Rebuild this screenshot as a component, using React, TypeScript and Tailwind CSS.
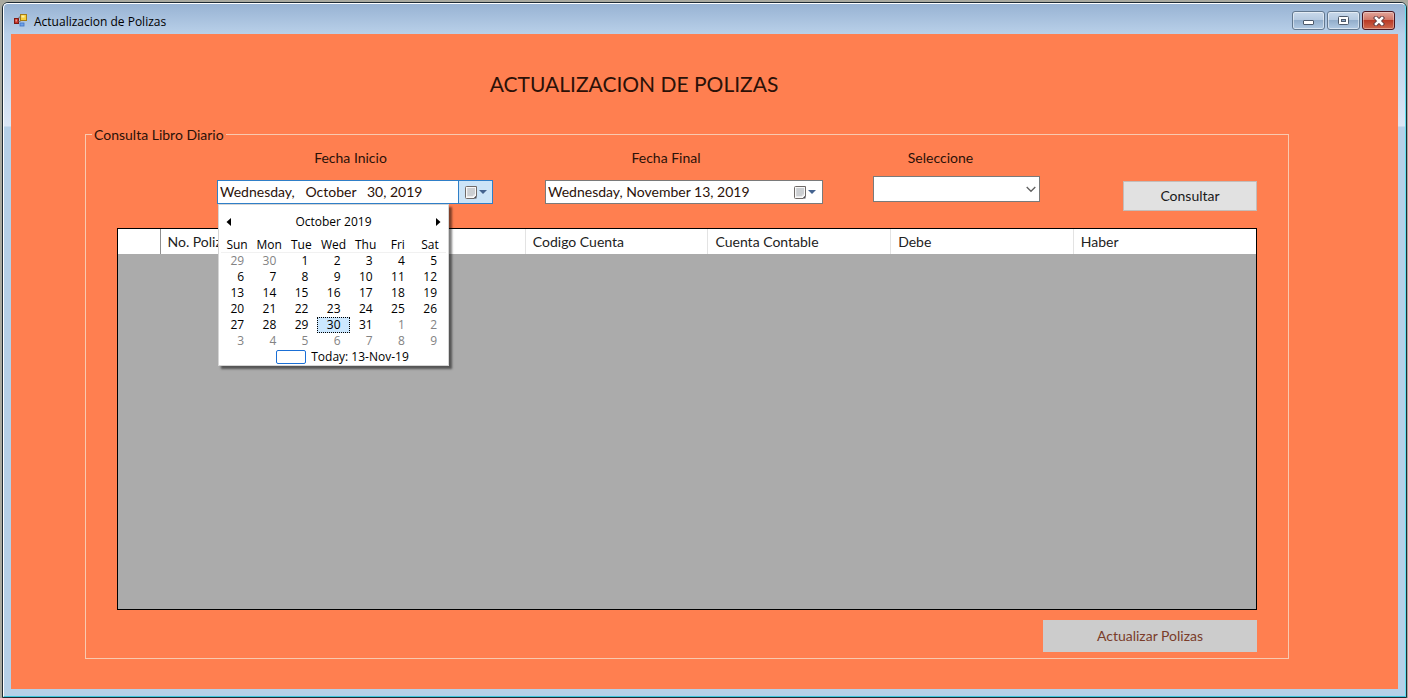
import { useState } from "react";

const WEEKDAYS = ["Sun", "Mon", "Tue", "Wed", "Thu", "Fri", "Sat"];

const WEEKS: number[][] = [
  [29, 30, 1, 2, 3, 4, 5],
  [6, 7, 8, 9, 10, 11, 12],
  [13, 14, 15, 16, 17, 18, 19],
  [20, 21, 22, 23, 24, 25, 26],
  [27, 28, 29, 30, 31, 1, 2],
  [3, 4, 5, 6, 7, 8, 9],
];

const COLUMNS = ["No. Poliza", "", "Codigo Cuenta", "Cuenta Contable", "Debe", "Haber"];

function isOutsideMonth(week: number, day: number) {
  return (week === 0 && day > 7) || (week > 3 && day < 10);
}

function AppIcon() {
  return (
    <svg width="14" height="14" viewBox="0 0 14 14" aria-hidden="true">
      <rect x="0.5" y="4.5" width="4" height="5" fill="#c8362c" stroke="#7d1a14" />
      <rect x="1.5" y="5.5" width="1.5" height="2" fill="#f09a90" />
      <rect x="6.5" y="0.5" width="6" height="6" fill="#f7cf3a" stroke="#a67c12" />
      <rect x="7.5" y="1.5" width="3" height="2" fill="#fdf0a0" />
      <rect x="6" y="9" width="4" height="3" fill="#6ea2ea" stroke="#3f73c4" strokeWidth="0.8" />
      <path d="M4.5 7.5h2M5 4.5v-1.5h1.5" stroke="#777" fill="none" />
    </svg>
  );
}

function MinimizeIcon() {
  return (
    <svg width="12" height="10" viewBox="0 0 12 10" aria-hidden="true">
      <rect x="0.5" y="4.5" width="10" height="4" rx="0.5" fill="#fff" stroke="#4d5a6b" />
    </svg>
  );
}

function MaximizeIcon() {
  return (
    <svg width="12" height="10" viewBox="0 0 12 10" aria-hidden="true">
      <rect x="0.5" y="0.5" width="10" height="8" rx="1" fill="#fff" stroke="#4d5a6b" />
      <rect x="3.5" y="3.5" width="4" height="2" fill="#8fa9c6" stroke="#4d5a6b" />
    </svg>
  );
}

function CloseIcon() {
  return (
    <svg width="12" height="10" viewBox="0 0 12 10" aria-hidden="true">
      <path d="M3 2 9 8M9 2 3 8" stroke="#5d3a40" strokeWidth="4.4" strokeLinecap="square" />
      <path d="M3 2 9 8M9 2 3 8" stroke="#fff" strokeWidth="2.6" strokeLinecap="square" />
    </svg>
  );
}

function CalendarIcon() {
  return (
    <svg width="22" height="13" viewBox="0 0 22 13" aria-hidden="true">
      <path d="M1.5 0.5h10v9.500l-2.500 2.500h-7.500a1 1 0 0 1-1-1v-10a1 1 0 0 1 1-1z" fill="#f8f8f8" stroke="#6f6a68" />
      <path d="M2.500 3h7.500M2.500 5h7.500M2.500 7h7.500M2.500 9h6M3 2v8.500M5 2v8.500M7 2v8.500M9 2v7.500" stroke="#a3a8ae" strokeWidth="0.600" />
      <path d="M11.500 9.500v3h-3z" fill="#4b4b52" />
      <path d="M14 4h8l-4 4z" fill="#44638f" />
    </svg>
  );
}

function MonthCalendar() {
  return (
    <div className="absolute top-6 left-px z-10 w-[231px] border border-[#d5d5d5] bg-white px-[2px] font-['Open_Sans','Noto_Sans',sans-serif] text-xs text-black shadow-[3px_3px_2px_rgba(0,0,0,0.5)]">
      <div className="flex h-[33px] items-center justify-between px-[4px]">
        <button type="button" aria-label="Previous month" className="p-px">
          <svg width="5" height="8" viewBox="0 0 5 8" aria-hidden="true">
            <path d="M5 0v8L0.500 4z" />
          </svg>
        </button>
        <span>October 2019</span>
        <button type="button" aria-label="Next month" className="p-px">
          <svg width="5" height="8" viewBox="0 0 5 8" aria-hidden="true">
            <path d="M0 0v8L4.500 4z" />
          </svg>
        </button>
      </div>
      <table className="w-full table-fixed border-collapse">
        <thead>
          <tr className="border-b border-[#f1f1f1] leading-[14px]">
            {WEEKDAYS.map((d) => (
              <th key={d} scope="col" className="p-0 text-center font-normal">
                {d}
              </th>
            ))}
          </tr>
        </thead>
        <tbody>
          {WEEKS.map((week, w) => (
            <tr key={w}>
              {week.map((day) => {
                const outside = isOutsideMonth(w, day);
                const selected = day === 30 && !outside;
                return (
                  <td key={day} className="p-0">
                    <button
                      type="button"
                      aria-pressed={selected}
                      className={
                        selected
                          ? "block h-4 w-full border border-dotted border-black bg-[#cce8ff] pr-2 text-right leading-[14px]"
                          : outside
                            ? "block h-4 w-full pr-[9px] text-right leading-4 text-[#838383]"
                            : "block h-4 w-full pr-[9px] text-right leading-4"
                      }
                    >
                      {day}
                    </button>
                  </td>
                );
              })}
            </tr>
          ))}
        </tbody>
      </table>
      <button type="button" className="flex h-4 w-full items-center justify-center gap-[5px] pl-[18px]">
        <span className="h-[14px] w-[30px] rounded-[2px] border border-[#1a6fd6]" />
        <span className="leading-4">Today: 13-Nov-19</span>
      </button>
    </div>
  );
}

export default function App() {
  const [start, setStart] = useState("Wednesday,   October   30, 2019");
  const [end, setEnd] = useState("Wednesday, November 13, 2019");

  return (
    <div className="flex min-h-screen flex-col bg-[#a9a99f] pt-[2px] pr-px pl-[2px] font-[Lato,'Open_Sans',sans-serif] text-sm text-[#2b1108]">
      <div className="flex flex-1 flex-col rounded-t-md border border-[#1d2a33] bg-[#b9d1ea]">
        <div className="flex flex-1 flex-col rounded-t-[5px] border border-t-white border-r-[#5fe0ee] border-b-[#3fc4dc] border-l-white bg-[linear-gradient(180deg,#98b3d3_0px,#b9d0e9_30px,#dbe6f5_122px,#b5d0e8_123px)] px-[7px] pb-[7px]">
          <header className="flex h-[30px] items-center gap-[6px] pt-[3px] pr-[3px] pl-[3px] font-['Open_Sans','Noto_Sans',sans-serif] text-xs text-black">
            <AppIcon />
            <h1 className="flex-1 pt-[3px] text-xs">Actualizacion de Polizas</h1>
            <div className="flex gap-[2px]">
              <button
                type="button"
                aria-label="Minimize"
                className="flex h-[19px] w-[33px] items-center justify-center rounded-[3px] border border-[#62788f] bg-[linear-gradient(180deg,#c9d9ea_0%,#b4c9e0_48%,#93aecb_50%,#b1cae3_100%)] shadow-[inset_0_0_0_1px_rgba(255,255,255,0.5)]"
              >
                <MinimizeIcon />
              </button>
              <button
                type="button"
                aria-label="Maximize"
                className="flex h-[19px] w-[33px] items-center justify-center rounded-[3px] border border-[#62788f] bg-[linear-gradient(180deg,#c9d9ea_0%,#b4c9e0_48%,#93aecb_50%,#b1cae3_100%)] shadow-[inset_0_0_0_1px_rgba(255,255,255,0.5)]"
              >
                <MaximizeIcon />
              </button>
              <button
                type="button"
                aria-label="Close"
                className="flex h-[19px] w-[33px] items-center justify-center rounded-[3px] border border-[#4b1620] bg-[linear-gradient(180deg,#e2a59b_0%,#d17565_48%,#b93a26_50%,#d0694f_100%)] shadow-[inset_0_0_0_1px_rgba(255,255,255,0.35)]"
              >
                <CloseIcon />
              </button>
            </div>
          </header>

          <main className="flex flex-1 flex-col bg-[#ff7f50] pt-[34px] pr-[109px] pb-[30px] pl-[74px]">
            <h2 className="pr-[106px] text-center text-[21px] leading-8">ACTUALIZACION DE POLIZAS</h2>

            <section
              aria-labelledby="consulta-libro"
              className="mt-[34px] flex flex-1 flex-col border border-[#f8c9b0] px-[31px] pb-[6px]"
            >
              <h3 id="consulta-libro" className="-mt-[10px] -ml-[25px] self-start bg-[#ff7f50] px-[2px] leading-5">
                Consulta Libro Diario
              </h3>

              <div className="flex h-[83px] items-start pt-[3px] pl-[100px]">
                <div className="mr-[52px] w-[276px]">
                  <label htmlFor="fecha-inicio" className="block pr-[9px] text-center leading-5">
                    Fecha Inicio
                  </label>
                  <div className="relative mt-[12px]">
                    <div className="flex h-6 border border-[#2f7fc8] bg-white">
                      <input
                        id="fecha-inicio"
                        value={start}
                        onChange={(e) => setStart(e.target.value)}
                        className="min-w-0 flex-1 pb-px pl-[2px] outline-none"
                      />
                      <button
                        type="button"
                        aria-label="Abrir calendario de fecha inicio"
                        className="flex w-[34px] items-center justify-center border-l border-[#2f7fc8] bg-[#cce4f7]"
                      >
                        <CalendarIcon />
                      </button>
                    </div>
                    <MonthCalendar />
                  </div>
                </div>

                <div className="mr-[50px] w-[278px]">
                  <label htmlFor="fecha-final" className="block pr-[36px] text-center leading-5">
                    Fecha Final
                  </label>
                  <div className="mt-[12px] flex h-6 border border-[#7a7a7a] bg-white">
                    <input
                      id="fecha-final"
                      value={end}
                      onChange={(e) => setEnd(e.target.value)}
                      className="min-w-0 flex-1 pb-px pl-[2px] outline-none"
                    />
                    <button
                      type="button"
                      aria-label="Abrir calendario de fecha final"
                      className="flex w-[34px] items-center justify-center"
                    >
                      <CalendarIcon />
                    </button>
                  </div>
                </div>

                <div className="w-[167px]">
                  <label htmlFor="seleccione" className="block pr-[32px] text-center leading-5">
                    Seleccione
                  </label>
                  <div className="relative mt-[8px]">
                    <select
                      id="seleccione"
                      className="block h-[26px] w-full appearance-none border border-[#7a7a7a] bg-white"
                    />
                    <svg
                      className="pointer-events-none absolute top-[10px] right-[4px]"
                      width="10"
                      height="7"
                      viewBox="0 0 10 7"
                      aria-hidden="true"
                    >
                      <path d="M0.700 1 5 5.300 9.300 1" fill="none" stroke="#606060" strokeWidth="1.300" />
                    </svg>
                  </div>
                </div>

                <button
                  type="button"
                  className="mt-[33px] ml-auto h-[30px] w-[134px] border border-[#c4bcb8] bg-[#e1e1e1] text-[#1a1a1a]"
                >
                  Consultar
                </button>
              </div>

              <div className="flex-1 border border-black bg-[#ababab]">
                <table className="w-full table-fixed border-collapse bg-white">
                  <thead>
                    <tr className="h-[25px]">
                      <td className="w-[42px] border-r border-[#8f8f8f] p-0" />
                      {COLUMNS.map((c, i) => (
                        <th
                          key={i}
                          scope="col"
                          className="border-r border-[#e3e3e3] py-0 pr-0 pl-[7px] text-left leading-5 font-normal text-[#222] last:border-r-0"
                        >
                          {c}
                        </th>
                      ))}
                    </tr>
                  </thead>
                </table>
              </div>

              <button
                type="button"
                disabled
                className="mt-[10px] h-[32px] w-[214px] self-end bg-[#cccccc] text-[#7a3c2a]"
              >
                Actualizar Polizas
              </button>
            </section>
          </main>
        </div>
      </div>
    </div>
  );
}
